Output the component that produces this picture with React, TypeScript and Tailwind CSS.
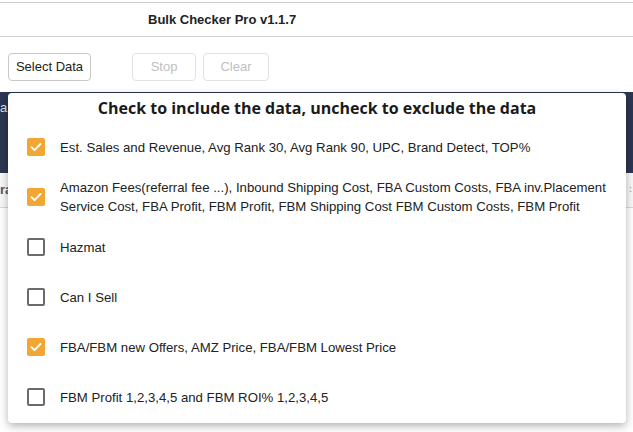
import React from "react";

const items = [
  { label: "Est. Sales and Revenue, Avg Rank 30, Avg Rank 90, UPC, Brand Detect, TOP%", checked: true },
  {
    label:
      "Amazon Fees(referral fee ...), Inbound Shipping Cost, FBA Custom Costs, FBA inv.Placement Service Cost, FBA Profit, FBM Profit, FBM Shipping Cost FBM Custom Costs, FBM Profit",
    checked: true,
  },
  { label: "Hazmat", checked: false },
  { label: "Can I Sell", checked: false },
  { label: "FBA/FBM new Offers, AMZ Price, FBA/FBM Lowest Price", checked: true },
  { label: "FBM Profit 1,2,3,4,5 and FBM ROI% 1,2,3,4,5", checked: false },
];

function Box({ checked }: { checked: boolean }) {
  if (checked) {
    return (
      <span className="flex h-[18px] w-[18px] shrink-0 items-center justify-center rounded-[2px] bg-[#f2a735]">
        <svg width="14" height="14" viewBox="0 0 14 14" fill="none">
          <path d="M2.5 7.2l3 3 6-6.2" stroke="white" strokeWidth="1.8" strokeLinecap="round" strokeLinejoin="round" />
        </svg>
      </span>
    );
  }
  return <span className="h-[18px] w-[18px] shrink-0 rounded-[2px] border-2 border-[#6b6b6b] bg-white" />;
}

export default function App() {
  return (
    <div className="relative h-[432px] w-[633px] overflow-hidden bg-white font-['Liberation_Sans',Arial,sans-serif] text-[#222]">
      <div className="mt-[2px] border-t border-[#cfcfcf]" />
      <div className="flex h-[34px] items-center border-b border-[#cfcfcf] pl-[148px] text-[13px] font-bold text-[#222]">
        Bulk Checker Pro v1.1.7
      </div>
      <div className="flex items-center pl-[8px] pt-[16px]">
        <button className="h-[28px] w-[83px] rounded-[4px] border border-[#c8c8c8] bg-white text-[13px] text-[#222]">
          Select Data
        </button>
        <button className="ml-[41px] h-[28px] w-[64px] rounded-[4px] border border-[#e2e2e2] bg-white text-[13px] text-[#c0c0c0]">
          Stop
        </button>
        <button className="ml-[7px] h-[28px] w-[66px] rounded-[4px] border border-[#e2e2e2] bg-white text-[13px] text-[#c0c0c0]">
          Clear
        </button>
      </div>

      {/* table behind the dialog */}
      <div className="mt-[11px]">
        <div className="flex h-[81px] items-start bg-[#2b3651] pt-[6px] text-[13px] text-[#dfe3ea]">
          <span>a</span>
        </div>
        <div className="flex h-[35px] items-center border-b border-[#d8d8d8] bg-[#f7f7f7] text-[13px] font-bold text-[#555]">
          <span>ra</span>
          <span className="ml-auto mr-[1px] text-[9px] text-[#aaa]">:</span>
        </div>
      </div>

      {/* dialog */}
      <div className="absolute left-[8px] top-[93px] h-[330px] w-[618px] rounded-[4px] bg-white shadow-[0_3px_8px_rgba(0,0,0,0.3)]">
        <div className="pt-[3px] text-center font-['Open_Sans',sans-serif] text-[16px] font-bold leading-[24px] text-[#1a1a1a]">
          Check to include the data, uncheck to exclude the data
        </div>
        <div className="mt-[2px]">
          {items.map((it) => (
            <div key={it.label} className="flex h-[50px] items-center gap-[15px] pl-[19px] pr-[8px]">
              <Box checked={it.checked} />
              <span className="text-[13.2px] leading-[19px] text-[#222]">{it.label}</span>
            </div>
          ))}
        </div>
      </div>
    </div>
  );
}
